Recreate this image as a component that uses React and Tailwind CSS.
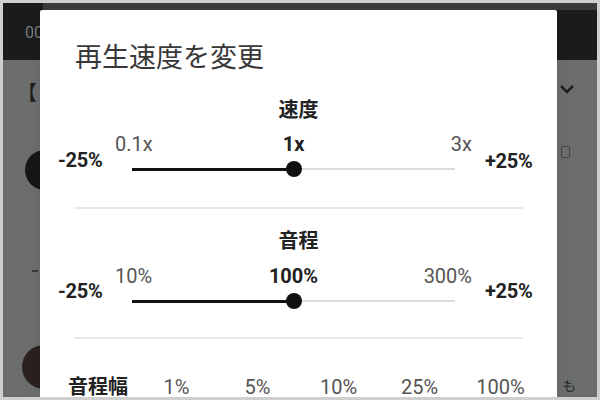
import React from 'react';

const font = { fontFamily: 'Roboto, "Noto Sans CJK JP", sans-serif' };

function Slider() {
  return (
    <div className="relative h-[16px] mx-[17px] mt-[5px] flex items-center">
      <div className="h-[2px] w-full bg-[#dcdcdc]" />
      <div className="absolute left-0 w-1/2 h-[3px] bg-[#111]" />
      <div className="absolute left-1/2 -ml-[8px] w-[16px] h-[16px] rounded-full bg-[#111]" />
    </div>
  );
}

function Section({ title, min, mid, max, leftPad, rightPad, titleGap }) {
  return (
    <div>
      <div className="text-center text-[20px] leading-[24px] font-bold text-[#222]">{title}</div>
      <div className={`flex ${titleGap}`}>
        <div className={`w-[75px] pl-[18px] ${leftPad} text-[20px] leading-[24px] font-bold text-[#222] tracking-[-0.3px]`}>-25%</div>
        <div className="w-[357px]">
          <div className="grid grid-cols-3 text-[20px] leading-[24px] text-[#555]">
            <span className="text-left">{min}</span>
            <span className="text-center font-bold text-[#222]">{mid}</span>
            <span className="text-right">{max}</span>
          </div>
          <Slider />
        </div>
        <div className={`pl-[13px] ${rightPad} text-[20px] leading-[24px] font-bold text-[#222] tracking-[-0.3px]`}>+25%</div>
      </div>
    </div>
  );
}

export default function App() {
  return (
    <div className="w-[600px] h-[400px] bg-[#cfcfcf] p-[3px] overflow-hidden" style={font}>
      <div className="relative w-full h-full overflow-hidden bg-[#6c6e6e] flex flex-col">
        {/* background app */}
        <div className="h-[57px] bg-[#1b1b1b] flex">
          <div className="pl-[22px] pt-[18px] text-[16px] text-[#7a7a7a]">00</div>
          <div className="flex-1 h-[7px] bg-[#3a3a3a]" />
        </div>
        <div className="flex flex-1">
          <div className="w-[37px] flex flex-col">
            <div className="mt-[23px] ml-[14px] text-[20px] leading-[20px] text-[#1e1e1e]">【</div>
            <div className="mt-[47px] ml-[22px] w-[40px] h-[40px] rounded-full bg-[#161616] shrink-0" />
            <div className="mt-[80px] ml-[29px] w-[6px] h-[2px] bg-[#3a3a3a]" />
            <div className="mt-[73px] ml-[19px] w-[44px] h-[44px] rounded-full bg-[#2a2020] shrink-0" />
          </div>
          <div className="flex-1" />
          <div className="w-[40px] flex flex-col">
            <svg className="mt-[24px] ml-[2px]" width="16" height="10" viewBox="0 0 16 10">
              <path d="M2 2 L8 8 L14 2" fill="none" stroke="#1e1e1e" strokeWidth="2.5" />
            </svg>
            <div className="mt-[52px] ml-[4px] w-[9px] h-[12px] border border-[#444] rounded-[2px]" />
            <div className="mt-[220px] ml-[5px] text-[14px] leading-[16px] text-[#2a2a2a]">も</div>
          </div>
        </div>

        {/* dialog */}
        <div className="absolute left-[37px] top-[7px] w-[517px] h-[400px] bg-white rounded-[2px] shadow-lg">
          <div className="pt-[30px] pl-[35px] text-[27px] leading-[36px] text-[#383838]">再生速度を変更</div>
          <div className="mt-[22px]">
            <Section title="速度" min="0.1x" mid="1x" max="3x" leftPad="pt-[16px]" rightPad="pt-[17px]" titleGap="mt-[10px]" />
          </div>
          <div className="mt-[30px] ml-[34px] w-[449px] h-[2px] bg-[#e8e8e8]" />
          <div className="mt-[20px]">
            <Section title="音程" min="10%" mid="100%" max="300%" leftPad="pt-[15px]" rightPad="pt-[15px]" titleGap="mt-[11px]" />
          </div>
          <div className="mt-[28px] ml-[34px] w-[449px] h-[2px] bg-[#e8e8e8]" />
          <div className="mt-[36px] pl-[28px] flex text-[20px] leading-[24px] text-[#555]">
            <span className="w-[68px] font-bold text-[#222]">音程幅</span>
            <span className="w-[81px] text-center">1%</span>
            <span className="w-[81px] text-center">5%</span>
            <span className="w-[81px] text-center">10%</span>
            <span className="w-[81px] text-center">25%</span>
            <span className="w-[81px] text-center">100%</span>
          </div>
        </div>
      </div>
    </div>
  );
}
